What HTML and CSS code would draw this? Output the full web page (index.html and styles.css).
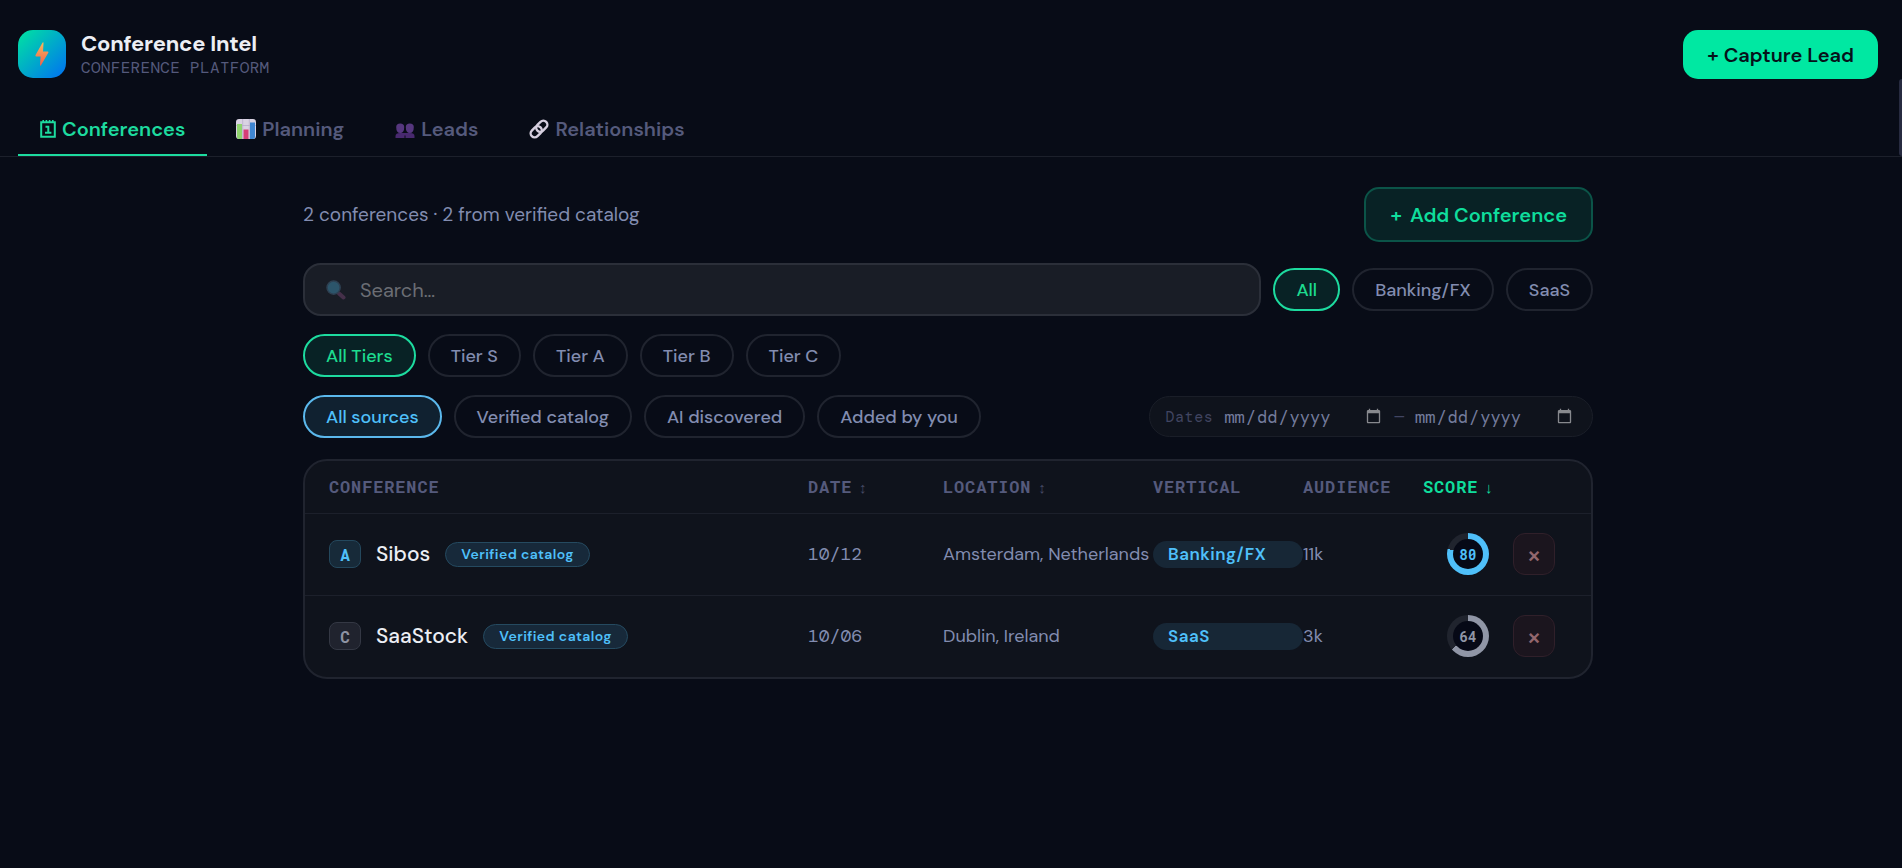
FILE: index.html
```
<!DOCTYPE html>
<html lang="en">
<head>
    <meta charset="UTF-8">
    <meta name="viewport" content="width=device-width, initial-scale=1.0">
    <title>Conference Intel</title>
    <link rel="stylesheet" href="styles.css">
</head>
<body>
    <header class="header">
        <div class="brand">
            <div class="logo">
                <svg width="14" height="24" viewBox="0 0 14 24" aria-hidden="true">
                    <defs>
                        <linearGradient id="bolt" x1="0" y1="0" x2="0" y2="1">
                            <stop offset="0" stop-color="#f5b95c"/>
                            <stop offset="1" stop-color="#f0604d"/>
                        </linearGradient>
                    </defs>
                    <path d="M7.6 .6 Q8.6 -.2 8.5 1.2 L8 9.5 H12.6 Q14 9.8 13 11.2 L6 23.2 Q5 24.4 5 22.8 L5.6 14.4 H1.2 Q0 14.2 .7 12.8 Z" fill="url(#bolt)"/>
                </svg>
            </div>
            <div>
                <h1 class="brand-name">Conference Intel</h1>
                <div class="brand-sub">CONFERENCE PLATFORM</div>
            </div>
        </div>
        <button type="button" class="btn-capture">+ Capture Lead</button>
    </header>

    <nav class="tabs">
        <a href="#conferences" class="tab active">
            <svg width="16" height="20" viewBox="0 0 16 20" fill="none" stroke="currentColor" aria-hidden="true">
                <path d="M1.2 3.2h13.6v14.6H1.2z" stroke-width="2"/>
                <path d="M3.2 1v3M6.4 1v3M9.6 1v3M12.8 1v3" stroke-width="1.6"/>
                <path d="M5.5 7.8h2.8v6M5 13.8h6.4" stroke-width="2"/>
            </svg>
            Conferences
        </a>
        <a href="#planning" class="tab">
            <svg width="20" height="20" viewBox="0 0 20 20" aria-hidden="true">
                <rect width="20" height="20" rx="3" fill="#d9d3e3"/>
                <path d="M0 6.5h20M6.7 0v20M13.3 0v20" stroke="#b9aecb" stroke-width=".8"/>
                <path d="M1 5h5v15H3q-2 0-2-2z" fill="#8fd46e"/>
                <path d="M7.5 10.5h5V20h-5z" fill="#d63e77"/>
                <path d="M14 3.5h5V18q0 2-2 2h-3z" fill="#3f86d2"/>
            </svg>
            Planning
        </a>
        <a href="#leads" class="tab">
            <svg width="20" height="20" viewBox="0 0 20 20" aria-hidden="true">
                <path d="M.5 19v-2q0-3 4.5-3h10q4.5 0 4.5 3v2z" fill="#48296f"/>
                <path d="M10 19v-2.5" stroke="#0a0d18"/>
                <path d="M1.2 8q0-3.5 4-3.5t4 3.5q0 6-4 6t-4-6zM10.800 8q0-3.500 4-3.500t4 3.500q0 6-4 6t-4-6z" fill="#56377f"/>
            </svg>
            Leads
        </a>
        <a href="#relationships" class="tab">
            <svg width="20" height="20" viewBox="0 0 20 20" fill="none" stroke="#d6cfdf" stroke-width="2.4" aria-hidden="true">
                <rect x="-6.2" y="-4" width="12.4" height="8" rx="4" transform="translate(12.8 7.2) rotate(-45)"/>
                <rect x="-6.2" y="-4" width="12.4" height="8" rx="4" transform="translate(7.2 12.8) rotate(-45)"/>
            </svg>
            Relationships
        </a>
    </nav>
    <div class="scroll-thumb"></div>

    <main class="content">
        <div class="row summary-row">
            <p class="summary">2 conferences · 2 from verified catalog</p>
            <button type="button" class="btn-add"><span>+</span><span>Add Conference</span></button>
        </div>

        <div class="row">
            <label class="search">
                <svg width="20" height="20" viewBox="0 0 20 20" aria-hidden="true">
                    <path d="M13 13.5l4.5 4" stroke="#45304a" stroke-width="4" stroke-linecap="round"/>
                    <circle cx="7.6" cy="7.6" r="6.6" fill="#2c556b" stroke="#2e4052" stroke-width="1.5"/>
                </svg>
                <input type="text" placeholder="Search…" aria-label="Search">
            </label>
            <button type="button" class="pill green">All</button>
            <button type="button" class="pill">Banking/FX</button>
            <button type="button" class="pill">SaaS</button>
        </div>

        <div class="row">
            <button type="button" class="pill green">All Tiers</button>
            <button type="button" class="pill">Tier S</button>
            <button type="button" class="pill">Tier A</button>
            <button type="button" class="pill">Tier B</button>
            <button type="button" class="pill">Tier C</button>
        </div>

        <div class="row">
            <button type="button" class="pill blue">All sources</button>
            <button type="button" class="pill">Verified catalog</button>
            <button type="button" class="pill">AI discovered</button>
            <button type="button" class="pill">Added by you</button>
            <div class="dates">
                <label for="dateFrom">Dates</label>
                <input type="date" id="dateFrom">
                <span>—</span>
                <input type="date" id="dateTo" aria-label="End date">
            </div>
        </div>

        <div class="card">
            <table class="conf-table">
                <colgroup>
                    <col>
                    <col class="col-date">
                    <col class="col-location">
                    <col class="col-vertical">
                    <col class="col-audience">
                    <col class="col-score">
                    <col class="col-actions">
                </colgroup>
                <thead>
                    <tr>
                        <th>CONFERENCE</th>
                        <th>DATE<span class="sort">↕</span></th>
                        <th>LOCATION<span class="sort">↕</span></th>
                        <th>VERTICAL</th>
                        <th>AUDIENCE</th>
                        <th class="sorted">SCORE<span class="sort">↓</span></th>
                        <th></th>
                    </tr>
                </thead>
                <tbody>
                    <tr>
                        <td>
                            <div class="conf">
                                <span class="tier tier-a">A</span>
                                <span class="conf-name">Sibos</span>
                                <span class="source">Verified catalog</span>
                            </div>
                        </td>
                        <td class="date">10/12</td>
                        <td>Amsterdam, Netherlands</td>
                        <td><span class="vertical">Banking/FX</span></td>
                        <td>11k</td>
                        <td><div class="ring ring-a"><span>80</span></div></td>
                        <td><button type="button" class="btn-delete" aria-label="Delete Sibos">×</button></td>
                    </tr>
                    <tr>
                        <td>
                            <div class="conf">
                                <span class="tier tier-c">C</span>
                                <span class="conf-name">SaaStock</span>
                                <span class="source">Verified catalog</span>
                            </div>
                        </td>
                        <td class="date">10/06</td>
                        <td>Dublin, Ireland</td>
                        <td><span class="vertical">SaaS</span></td>
                        <td>3k</td>
                        <td><div class="ring ring-c"><span>64</span></div></td>
                        <td><button type="button" class="btn-delete" aria-label="Delete SaaStock">×</button></td>
                    </tr>
                </tbody>
            </table>
        </div>
    </main>
</body>
</html>
```
FILE: styles.css
```
:root {
    --bg: #080c17;
    --green: #00e8a2;
    --blue: #4fc0fa;
    --text: #eceef4;
    --soft: #828cb0;
    --muted: #555a7c;
    --line: #1c202b;
    --sans: "DM Sans", Inter, sans-serif;
    --mono: "DM Mono", "Roboto Mono", "Liberation Mono", monospace;
    --mono-bold: "Roboto Mono", "Liberation Mono", monospace;
}
* {
    box-sizing: border-box;
}
body {
    margin: 0;
    min-height: 100vh;
    position: relative;
    background: var(--bg);
    color: var(--text);
    font-family: var(--sans);
    color-scheme: dark;
}
button,
input {
    font-family: inherit;
    margin: 0;
}
button {
    cursor: pointer;
}

/* header */
.header {
    display: flex;
    justify-content: space-between;
    align-items: flex-start;
    padding: 30px 24px 29px 18px;
}
.brand {
    display: flex;
    align-items: center;
    gap: 15px;
}
.logo {
    display: flex;
    align-items: center;
    justify-content: center;
    width: 48px;
    height: 48px;
    border-radius: 15px;
    background: linear-gradient(135deg, #00e5a0, #0070f3);
}
.brand-name {
    margin: 0;
    font-size: 22px;
    font-weight: 700;
    line-height: 27px;
    letter-spacing: -0.01em;
}
.brand-sub {
    font-family: var(--mono);
    font-size: 16px;
    line-height: 21px;
    letter-spacing: 0.02em;
    color: var(--muted);
}
.btn-capture {
    height: 49px;
    padding: 0 24px;
    border: none;
    border-radius: 15px;
    background: var(--green);
    color: #06121a;
    font-size: 20px;
    font-weight: 600;
}

/* tabs */
.tabs {
    display: flex;
    gap: 7px;
    padding-left: 18px;
    border-bottom: 1px solid var(--line);
}
.tab {
    display: flex;
    align-items: center;
    gap: 6px;
    height: 48px;
    padding: 0 22px 4px;
    border-bottom: 2px solid transparent;
    color: var(--muted);
    font-size: 20px;
    font-weight: 600;
    text-decoration: none;
}
.tab.active {
    color: #1ddb9f;
    border-bottom-color: #1ddb9f;
}
.scroll-thumb {
    position: absolute;
    top: 79px;
    right: 0;
    width: 3px;
    height: 77px;
    border-radius: 3px 0 0 3px;
    background: #272b40;
}

/* filters */
.content {
    display: flex;
    flex-direction: column;
    gap: 18px;
    max-width: 1326px;
    margin: 0 auto;
    padding: 30px 21px 48px 15px;
}
.row {
    display: flex;
    align-items: center;
    gap: 12px;
}
.summary-row {
    justify-content: space-between;
    margin-bottom: 3px;
}
.summary {
    margin: 0;
    font-size: 19px;
    color: var(--soft);
}
.btn-add {
    display: flex;
    align-items: center;
    gap: 8px;
    height: 55px;
    padding: 0 24px 0 25px;
    border: 2px solid #0b5448;
    border-radius: 15px;
    background: #082225;
    color: #0fdd9c;
    font-size: 20px;
    font-weight: 600;
}
.search {
    flex: 1;
    display: flex;
    align-items: center;
    gap: 14px;
    height: 53px;
    padding: 0 21px;
    border: 2px solid #2b2f39;
    border-radius: 18px;
    background: #191d26;
}
.search input {
    flex: 1;
    padding: 0;
    border: none;
    outline: none;
    background: none;
    color: var(--text);
    font-size: 20px;
}
.search input::placeholder {
    color: #6b6d74;
}
.pill {
    height: 43px;
    padding: 0 21px;
    border: 2px solid #20242f;
    border-radius: 22px;
    background: transparent;
    color: var(--soft);
    font-size: 18px;
    font-weight: 500;
}
.pill.green {
    border-color: #1ddb9f;
    background: #082225;
    color: #1ddb8f;
}
.pill.blue {
    border-color: #5bb8ec;
    background: #102130;
    color: var(--blue);
}
.dates {
    display: flex;
    align-items: center;
    gap: 10px;
    height: 41px;
    margin-left: auto;
    padding: 0 17px 0 15px;
    border: 1px solid #1a1e28;
    border-radius: 21px;
    background: #0f131c;
    color: #414561;
    font-family: var(--mono);
}
.dates label {
    font-size: 15px;
    letter-spacing: 0.04em;
}
.dates input {
    width: 161px;
    padding: 0;
    border: none;
    background: none;
    color: #747c9c;
    font-family: var(--mono);
    font-size: 17px;
}
.dates input::-webkit-calendar-picker-indicator {
    opacity: 0.5;
}

/* table */
.card {
    margin-top: 3px;
    border: 2px solid #20242f;
    border-radius: 24px;
    background: #0f131c;
    overflow: hidden;
}
.conf-table {
    width: 100%;
    table-layout: fixed;
    border-collapse: collapse;
}
.col-date { width: 135px; }
.col-location { width: 210px; }
.col-vertical { width: 150px; }
.col-audience { width: 120px; }
.col-score { width: 90px; }
.col-actions { width: 78px; }
.conf-table th,
.conf-table td {
    padding: 0;
    text-align: left;
    white-space: nowrap;
}
.conf-table th:first-child,
.conf-table td:first-child {
    padding-left: 24px;
}
.conf-table th {
    height: 52px;
    font-family: var(--mono-bold);
    font-size: 17px;
    font-weight: 700;
    letter-spacing: 0.05em;
    color: var(--muted);
}
.conf-table th.sorted {
    color: #0fdd9c;
}
.sort {
    margin-left: 6px;
    font-family: var(--mono);
    font-size: 15px;
    font-weight: 500;
    color: #444862;
}
.sorted .sort {
    color: inherit;
}
.conf-table td {
    height: 82px;
    border-top: 1px solid var(--line);
    color: var(--soft);
    font-size: 18px;
}
.conf-table .date {
    font-family: var(--mono);
}
.conf {
    display: flex;
    align-items: center;
    gap: 15px;
}
.tier {
    display: flex;
    align-items: center;
    justify-content: center;
    width: 32px;
    height: 28px;
    border: 1px solid;
    border-radius: 8px;
    font-family: var(--mono-bold);
    font-size: 16px;
    font-weight: 700;
}
.tier-a {
    border-color: #24485d;
    background: #172a39;
    color: var(--blue);
}
.tier-c {
    border-color: #343844;
    background: #20232e;
    color: #8e93a3;
}
.conf-name {
    color: var(--text);
    font-size: 21px;
    font-weight: 500;
}
.source {
    display: flex;
    align-items: center;
    height: 25px;
    padding: 0 15px;
    border: 1px solid #254a60;
    border-radius: 13px;
    background: #17293a;
    color: var(--blue);
    font-size: 14px;
    font-weight: 600;
    letter-spacing: 0.03em;
}
.vertical {
    display: flex;
    align-items: center;
    height: 27px;
    padding: 0 15px;
    border-radius: 14px;
    background: #172736;
    color: var(--blue);
    font-size: 17px;
    font-weight: 600;
    letter-spacing: 0.03em;
}
.ring {
    display: flex;
    align-items: center;
    justify-content: center;
    width: 42px;
    height: 42px;
    margin: 0 auto;
    border-radius: 50%;
}
.ring span {
    display: flex;
    align-items: center;
    justify-content: center;
    width: 30px;
    height: 30px;
    border-radius: 50%;
    background: #060916;
    font-family: var(--mono-bold);
    font-size: 14px;
    font-weight: 700;
}
.ring-a {
    background: conic-gradient(var(--blue) 79%, #20242e 0);
    color: var(--blue);
}
.ring-c {
    background: conic-gradient(#9096a6 64%, #20242e 0);
    color: #9096a6;
}
.btn-delete {
    display: block;
    width: 42px;
    height: 42px;
    padding: 0;
    border: 1px solid #30202a;
    border-radius: 12px;
    background: #1b151e;
    color: #93666d;
    font-size: 27px;
    font-weight: 500;
    line-height: 1;
}
```
